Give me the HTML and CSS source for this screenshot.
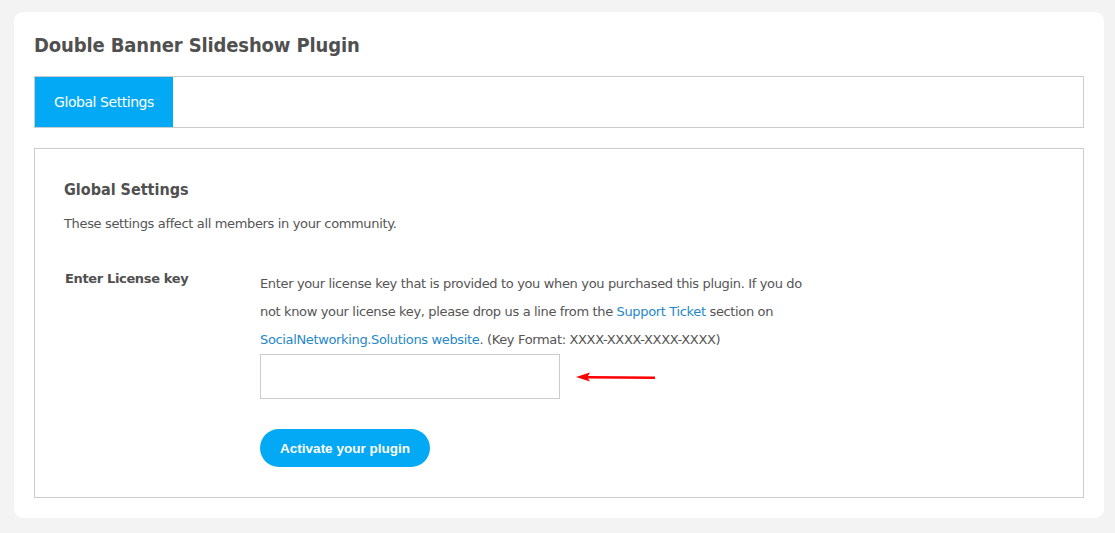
FILE: index.html
```html
<!DOCTYPE html>
<html lang="en">
<head>
<meta charset="utf-8">
<title>Double Banner Slideshow Plugin</title>
<link rel="stylesheet" href="styles.css">
</head>
<body>
<div class="card">
  <h1 class="title">Double Banner Slideshow Plugin</h1>
  <div class="tabs">
    <a class="tab active" href="#">Global Settings</a>
  </div>
  <div class="panel">
    <h2 class="panel-title">Global Settings</h2>
    <p class="panel-desc">These settings affect all members in your community.</p>
    <div class="form-row">
      <div class="label">Enter License key</div>
      <div class="field">
        <p class="hint">Enter your license key that is provided to you when you purchased this plugin. If you do not know your license key, please drop us a line from the <a href="#">Support Ticket</a> section on <a href="#">SocialNetworking.Solutions website</a>. (Key Format: XXXX-XXXX-XXXX-XXXX)</p>
        <div class="input-row">
          <input class="key-input" type="text">
          <svg class="arrow" width="82" height="12" viewBox="0 0 82 12">
            <path d="M1 6 L15 1.5 L13 5 L80 5.5 L80 8 L13 7.5 L15 10.5 Z" fill="#f00"/>
          </svg>
        </div>
        <button class="btn" type="button">Activate your plugin</button>
      </div>
    </div>
  </div>
</div>
</body>
</html>
```
FILE: styles.css
```css
* { box-sizing: border-box; }
html, body { margin: 0; padding: 0; }
body {
  background: #f3f3f3;
  font-family: "DejaVu Sans", Verdana, sans-serif;
  color: #555;
  padding: 12px 11px 15px 14px;
}
.card {
  background: #fff;
  border-radius: 9px;
  padding: 21px 20px 20px 20px;
  width: 1090px;
  height: 506px;
}
.title {
  margin: 0 0 19px;
  font-family: "DejaVu Sans Condensed", "DejaVu Sans", sans-serif;
  font-stretch: condensed;
  font-size: 20px;
  font-weight: bold;
  letter-spacing: -0.13px;
  color: #505050;
  line-height: 24px;
}
.tabs {
  border: 1px solid #ccc;
  height: 52px;
  display: flex;
  margin-bottom: 20px;
}
.tab {
  display: flex;
  align-items: center;
  justify-content: center;
  width: 138px;
  background: #03a9f4;
  color: #fff;
  font-size: 14px;
  letter-spacing: -0.45px;
  text-decoration: none;
}
.panel {
  border: 1px solid #ccc;
  height: 350px;
  padding: 30px 29px;
}
.panel-title {
  margin: 0 0 14px;
  font-family: "DejaVu Sans Condensed", "DejaVu Sans", sans-serif;
  font-stretch: condensed;
  font-size: 16px;
  font-weight: bold;
  line-height: 22px;
  color: #505050;
}
.panel-desc {
  margin: 0 0 35px;
  font-size: 13px;
  letter-spacing: -0.35px;
  line-height: 18px;
  color: #555;
}
.form-row { display: flex; }
.label {
  width: 196px;
  font-size: 13px;
  font-weight: bold;
  letter-spacing: -0.35px;
  color: #505050;
  line-height: 20px;
  padding-left: 1px;
  padding-top: 1px;
}
.field { width: 555px; }
.hint {
  margin: 2px 0 0;
  font-size: 13px;
  letter-spacing: -0.35px;
  line-height: 28px;
  color: #555;
}
.hint a { color: #1f88c8; text-decoration: none; }
.input-row { display: flex; align-items: center; margin-top: 0; }
.key-input {
  width: 300px;
  height: 45px;
  border: 1px solid #ccc;
  margin: 0;
}
.arrow { margin-left: 15px; }
.btn {
  margin-top: 30px;
  width: 170px;
  height: 38px;
  border: none;
  border-radius: 19px;
  background: #03a9f4;
  color: #fff;
  font-family: "Liberation Sans", Arial, sans-serif;
  font-weight: bold;
  font-size: 13.5px;
}
```
